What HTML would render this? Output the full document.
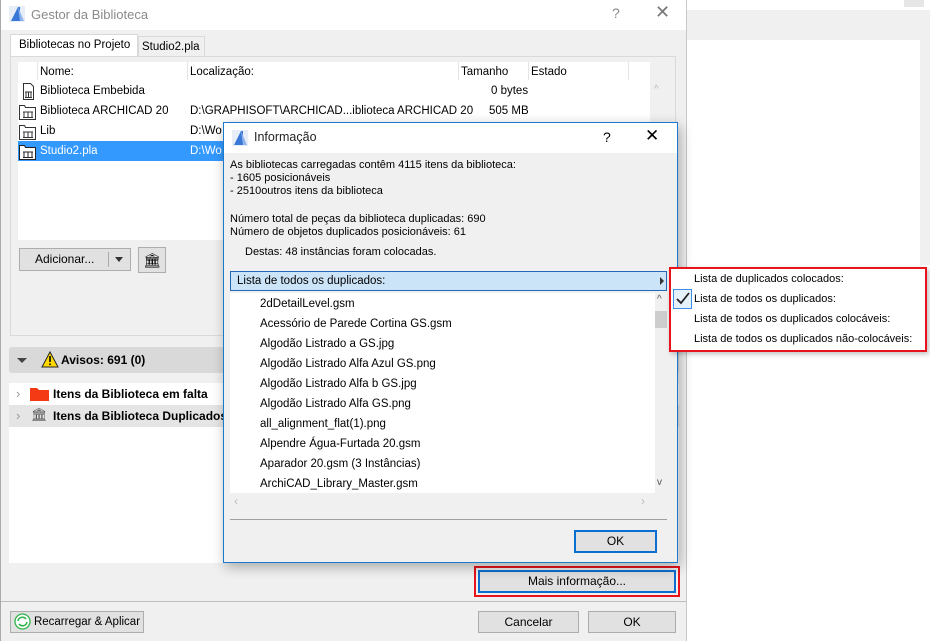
<!DOCTYPE html>
<html><head><meta charset="utf-8"><style>
*{box-sizing:border-box;margin:0;padding:0}
body{width:930px;height:641px;position:relative;overflow:hidden;background:#fff;font-family:"Liberation Sans",sans-serif;font-size:11px;color:#000}
.a{position:absolute}
.btn{position:absolute;background:#e1e1e1;border:1px solid #adadad;text-align:center;font-size:12px;white-space:nowrap}
.row{position:absolute;height:20px;line-height:20px;font-size:11.5px;white-space:nowrap}
</style></head><body>
<!-- right background -->
<div class="a" style="left:687px;top:10px;width:243px;height:255px;background:#f0f0f0"></div>
<div class="a" style="left:687px;top:40px;width:233px;height:601px;background:#fff"></div>
<div class="a" style="left:904px;top:0;width:20px;height:7px;background:#e6e6e6"></div>
<!-- main dialog -->
<div class="a" style="left:0;top:0;width:687px;height:641px;background:#f0f0f0;border-right:1px solid #c8c8c8;border-left:1px solid #aaa"></div>
<div class="a" style="left:1px;top:0;width:685px;height:30px;background:#fff"></div>
<svg class="a" style="left:9px;top:6px" width="16" height="16"><rect width="16" height="16" fill="#e8eef8"/><path d="M2 15 L9 1 L11 1 L11 15 Z" fill="#3a78d8"/><path d="M9 1 L15 15 L11 15 Z" fill="#8fb4ee"/></svg>
<div class="a" style="left:31px;top:7px;font-size:13px;color:#8a8a8a">Gestor da Biblioteca</div>
<div class="a" style="left:612px;top:5px;font-size:14px;color:#888">?</div>
<div class="a" style="left:655px;top:2px;font-size:18px;color:#777">✕</div>
<!-- tabs -->
<div class="a" style="left:10px;top:34px;width:128px;height:23px;background:#fff;border:1px solid #d9d9d9;border-bottom:none;font-size:11.5px;padding:4px 0 0 8px">Bibliotecas no Projeto</div>
<div class="a" style="left:138px;top:36px;width:67px;height:20px;background:#f0f0f0;border:1px solid #d9d9d9;border-bottom:none;font-size:11.5px;padding:4px 0 0 3px">Studio2.pla</div>
<div class="a" style="left:10px;top:56px;width:666px;height:280px;border:1px solid #d9d9d9;background:#f0f0f0"></div>
<div class="a" style="left:18px;top:62px;width:632px;height:178px;background:#fff"></div>
<div class="a" style="left:650px;top:80px;width:16px;height:160px;background:#f0f0f0"></div>
<div class="a" style="left:654px;top:84px;font-size:10px;color:#bbb">^</div>
<div class="a" style="left:37px;top:62px;width:1px;height:18px;background:#e5e5e5"></div>
<div class="a" style="left:187px;top:62px;width:1px;height:18px;background:#e5e5e5"></div>
<div class="a" style="left:458px;top:62px;width:1px;height:18px;background:#e5e5e5"></div>
<div class="a" style="left:528px;top:62px;width:1px;height:18px;background:#e5e5e5"></div>
<div class="a" style="left:628px;top:62px;width:1px;height:18px;background:#e5e5e5"></div>
<div class="row" style="left:40px;top:62px">Nome:</div>
<div class="row" style="left:190px;top:62px">Localização:</div>
<div class="row" style="left:461px;top:62px">Tamanho</div>
<div class="row" style="left:531px;top:62px">Estado</div>
<div class="a" style="left:18px;top:141px;width:207px;height:20px;background:#3399ff"></div>
<div class="row" style="left:40px;top:81px">Biblioteca Embebida</div>
<div class="row" style="left:40px;top:101px">Biblioteca ARCHICAD 20</div>
<div class="row" style="left:40px;top:121px">Lib</div>
<div class="row" style="left:40px;top:141px;color:#fff">Studio2.pla</div>
<div class="row" style="left:190px;top:101px">D:\GRAPHISOFT\ARCHICAD...iblioteca ARCHICAD 20</div>
<div class="row" style="left:190px;top:121px">D:\Wo</div>
<div class="row" style="left:190px;top:141px;color:#fff">D:\Wo</div>
<div class="row" style="left:491px;top:81px">0 bytes</div>
<div class="row" style="left:489px;top:101px">505 MB</div>
<svg class="a" style="left:19px;top:82px" width="18" height="80" fill="none" stroke="#333" stroke-width="1">
<path d="M4.5 1.5h7l3 3v13h-10z"/><path d="M6 10h7M7 10v5M9.5 10v5M12 10v5M6 15.5h7"/>
<g transform="translate(0,20)"><path d="M0.5 3.5h5l1 2h10v12h-16z"/><path d="M4 10h10M5 10v5M9 10v5M13 10v5M4 15.5h10"/></g>
<g transform="translate(0,40)"><path d="M0.5 3.5h5l1 2h10v12h-16z"/><path d="M4 10h10M5 10v5M9 10v5M13 10v5M4 15.5h10"/></g>
<g transform="translate(0,60)" stroke="#222"><path d="M0.5 3.5h5l1 2h10v12h-16z" fill="#fff"/><path d="M4 10h10M5 10v5M9 10v5M13 10v5M4 15.5h10"/></g>
</svg>
<div class="btn" style="left:19px;top:248px;width:112px;height:23px;line-height:21px;text-align:left;padding-left:15px">Adicionar...</div>
<div class="a" style="left:108px;top:252px;width:1px;height:15px;background:#aaa"></div>
<div class="a" style="left:115px;top:257px;border-left:4px solid transparent;border-right:4px solid transparent;border-top:5px solid #333"></div>
<div class="btn" style="left:138px;top:247px;width:28px;height:26px;font-size:14px;line-height:24px">🏛</div>
<!-- avisos -->
<div class="a" style="left:9px;top:347px;width:670px;height:26px;background:#d9d9d9;border-radius:3px"></div>
<div class="a" style="left:17px;top:358px;border-left:5px solid transparent;border-right:5px solid transparent;border-top:5px solid #444"></div>
<svg class="a" style="left:41px;top:351px" width="18" height="17"><path d="M9 1L17 16H1Z" fill="#ffd800" stroke="#222"/><rect x="8.2" y="5" width="1.6" height="6" fill="#000"/><rect x="8.2" y="12.5" width="1.6" height="1.6" fill="#000"/></svg>
<div class="a" style="left:61px;top:353px;font-size:12px;font-weight:bold">Avisos: 691 (0)</div>
<div class="a" style="left:9px;top:383px;width:670px;height:180px;background:#fff"></div>
<div class="a" style="left:9px;top:405px;width:670px;height:22px;background:#e5e5e5"></div>
<div class="a" style="left:16px;top:386px;color:#999;font-size:13px">›</div>
<div class="a" style="left:16px;top:408px;color:#999;font-size:13px">›</div>
<svg class="a" style="left:30px;top:386px" width="19" height="15"><path d="M0 2h7l2 2h10v11H0z" fill="#f33a14"/></svg>
<div class="a" style="left:31px;top:407px;font-size:13px;color:#555">🏛</div>
<div class="a" style="left:53px;top:387px;font-size:12px;font-weight:bold">Itens da Biblioteca em falta</div>
<div class="a" style="left:53px;top:409px;font-size:12px;font-weight:bold">Itens da Biblioteca Duplicados</div>
<div class="a" style="left:1px;top:601px;width:685px;height:1px;background:#bdbdbd"></div>
<div class="btn" style="left:10px;top:611px;width:134px;height:22px;line-height:20px;padding-left:20px;font-size:11.5px">Recarregar &amp; Aplicar</div>
<svg class="a" style="left:14px;top:613px" width="17" height="17"><circle cx="8.5" cy="8.5" r="7.5" fill="#fff" stroke="#2cb34a" stroke-width="1.3"/><path d="M4 8a4.5 4.5 0 0 1 8-2M13 9a4.5 4.5 0 0 1-8 2" fill="none" stroke="#2cb34a" stroke-width="1.5"/></svg>
<div class="btn" style="left:478px;top:611px;width:101px;height:22px;line-height:20px">Cancelar</div>
<div class="btn" style="left:588px;top:611px;width:88px;height:22px;line-height:20px">OK</div>
<div class="a" style="left:474px;top:566px;width:206px;height:31px;border:2px solid #e8141c"></div>
<div class="btn" style="left:478px;top:570px;width:198px;height:23px;line-height:19px;border:2px solid #0a6fd0">Mais informação...</div>
<!-- info dialog -->
<div class="a" style="left:223px;top:122px;width:455px;height:441px;background:#f0f0f0;border:1px solid #1979ca;box-shadow:2px 4px 12px rgba(0,0,0,.3)"></div>
<div class="a" style="left:224px;top:123px;width:453px;height:30px;background:#fff"></div>
<svg class="a" style="left:232px;top:130px" width="16" height="16"><rect width="16" height="16" fill="#e8eef8"/><path d="M2 15 L9 1 L11 1 L11 15 Z" fill="#3a78d8"/><path d="M9 1 L15 15 L11 15 Z" fill="#8fb4ee"/></svg>
<div class="a" style="left:254px;top:130px;font-size:12.5px;color:#222">Informação</div>
<div class="a" style="left:603px;top:129px;font-size:14px">?</div>
<div class="a" style="left:645px;top:126px;font-size:17px">✕</div>
<div class="a" style="left:230px;top:159px;font-size:11px;line-height:13px">As bibliotecas carregadas contêm 4115 itens da biblioteca:<br>- 1605 posicionáveis<br>- 2510outros itens da biblioteca</div>
<div class="a" style="left:230px;top:213px;font-size:11px;line-height:13px">Número total de peças da biblioteca duplicadas: 690<br>Número de objetos duplicados posicionáveis: 61</div>
<div class="a" style="left:245px;top:246px;font-size:11px">Destas: 48 instâncias foram colocadas.</div>
<div class="a" style="left:230px;top:271px;width:437px;height:20px;background:#cce4f7;border:1px solid #2466b8;font-size:11.5px;line-height:18px;padding-left:6px">Lista de todos os duplicados:</div>
<div class="a" style="left:660px;top:277px;border-top:4px solid transparent;border-bottom:4px solid transparent;border-left:4px solid #333"></div>
<div class="a" style="left:230px;top:293px;width:425px;height:200px;background:#fff"></div>
<div class="a" style="left:655px;top:293px;width:12px;height:200px;background:#f0f0f0"></div>
<div class="a" style="left:655px;top:311px;width:12px;height:17px;background:#cdcdcd"></div>
<div class="a" style="left:657px;top:294px;font-size:10px;color:#555">^</div>
<div class="a" style="left:657px;top:477px;font-size:10px;color:#555">v</div>
<div class="a" style="left:234px;top:494px;color:#bbb;font-size:12px">‹</div>
<div class="a" style="left:641px;top:494px;color:#bbb;font-size:12px">›</div>
<div class="row" style="left:260px;top:294px">2dDetailLevel.gsm</div>
<div class="row" style="left:260px;top:314px">Acessório de Parede Cortina GS.gsm</div>
<div class="row" style="left:260px;top:334px">Algodão Listrado a GS.jpg</div>
<div class="row" style="left:260px;top:354px">Algodão Listrado Alfa Azul GS.png</div>
<div class="row" style="left:260px;top:374px">Algodão Listrado Alfa b GS.jpg</div>
<div class="row" style="left:260px;top:394px">Algodão Listrado Alfa GS.png</div>
<div class="row" style="left:260px;top:414px">all_alignment_flat(1).png</div>
<div class="row" style="left:260px;top:434px">Alpendre Água-Furtada 20.gsm</div>
<div class="row" style="left:260px;top:454px">Aparador 20.gsm (3 Instâncias)</div>
<div class="row" style="left:260px;top:474px">ArchiCAD_Library_Master.gsm</div>
<div class="a" style="left:230px;top:519px;width:437px;height:1px;background:#a0a0a0"></div>
<div class="btn" style="left:574px;top:530px;width:83px;height:23px;line-height:19px;border:2px solid #0a6fd0">OK</div>
<!-- context menu -->
<div class="a" style="left:669px;top:267px;width:258px;height:85px;background:#fff;border:2px solid #e8141c;box-shadow:2px 2px 5px rgba(0,0,0,.25)"></div>
<div class="a" style="left:673px;top:289px;width:19px;height:20px;border:1px solid #3d8ee8;background:#e5f1fb"></div>
<svg class="a" style="left:675px;top:291px" width="15" height="15"><path d="M2 8l4 4 8-10" fill="none" stroke="#222" stroke-width="1.8"/></svg>
<div class="row" style="left:694px;top:269px;font-size:11px">Lista de duplicados colocados:</div>
<div class="row" style="left:694px;top:289px;font-size:11px">Lista de todos os duplicados:</div>
<div class="row" style="left:694px;top:309px;font-size:11px">Lista de todos os duplicados colocáveis:</div>
<div class="row" style="left:694px;top:329px;font-size:11px">Lista de todos os duplicados não-colocáveis:</div>
</body></html>
